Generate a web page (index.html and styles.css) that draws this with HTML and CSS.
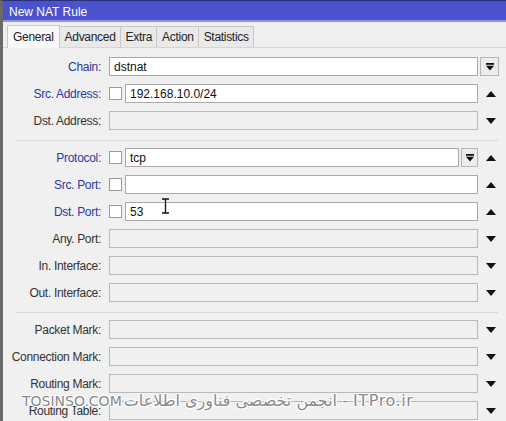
FILE: index.html
```html
<!DOCTYPE html>
<html lang="en">
<head>
    <meta charset="UTF-8">
    <title>New NAT Rule</title>
    <link rel="stylesheet" href="styles.css">
</head>
<body>
    <div class="window">
        <div class="titlebar">New NAT Rule</div>

        <div class="tabs">
            <div class="tab active">General</div>
            <div class="tab">Advanced</div>
            <div class="tab">Extra</div>
            <div class="tab">Action</div>
            <div class="tab">Statistics</div>
        </div>

        <div class="panel">
            <div class="row">
                <div class="label blue">Chain:</div>
                <div class="field">
                    <div class="input">dstnat</div>
                    <div class="dropbtn"><svg width="8" height="8" viewBox="0 0 9 9"><rect x="0" y="0" width="9" height="2" fill="#111"/><path d="M0 3h9L4.5 8.5z" fill="#111"/></svg></div>
                </div>
                <div class="arrow"></div>
            </div>
            <div class="row">
                <div class="label blue">Src. Address:</div>
                <div class="field">
                    <div class="check"></div>
                    <div class="input">192.168.10.0/24</div>
                </div>
                <div class="arrow"><svg width="10" height="6" viewBox="0 0 10 6"><path d="M0 6L5 0l5 6z" fill="#111"/></svg></div>
            </div>
            <div class="row">
                <div class="label">Dst. Address:</div>
                <div class="field"><div class="input off"></div></div>
                <div class="arrow"><svg width="10" height="6" viewBox="0 0 10 6"><path d="M0 0h10L5 6z" fill="#111"/></svg></div>
            </div>

            <div class="sep"></div>

            <div class="row">
                <div class="label blue">Protocol:</div>
                <div class="field">
                    <div class="check"></div>
                    <div class="input">tcp</div>
                    <div class="dropbtn small"><svg width="8" height="8" viewBox="0 0 9 9"><rect x="0" y="0" width="9" height="2" fill="#111"/><path d="M0 3h9L4.5 8.5z" fill="#111"/></svg></div>
                </div>
                <div class="arrow"><svg width="10" height="6" viewBox="0 0 10 6"><path d="M0 6L5 0l5 6z" fill="#111"/></svg></div>
            </div>
            <div class="row">
                <div class="label blue">Src. Port:</div>
                <div class="field">
                    <div class="check"></div>
                    <div class="input"></div>
                </div>
                <div class="arrow"><svg width="10" height="6" viewBox="0 0 10 6"><path d="M0 6L5 0l5 6z" fill="#111"/></svg></div>
            </div>
            <div class="row">
                <div class="label blue">Dst. Port:</div>
                <div class="field">
                    <div class="check"></div>
                    <div class="input">53</div>
                </div>
                <div class="arrow"><svg width="10" height="6" viewBox="0 0 10 6"><path d="M0 6L5 0l5 6z" fill="#111"/></svg></div>
            </div>
            <div class="row">
                <div class="label">Any. Port:</div>
                <div class="field"><div class="input off"></div></div>
                <div class="arrow"><svg width="10" height="6" viewBox="0 0 10 6"><path d="M0 0h10L5 6z" fill="#111"/></svg></div>
            </div>
            <div class="row">
                <div class="label">In. Interface:</div>
                <div class="field"><div class="input off"></div></div>
                <div class="arrow"><svg width="10" height="6" viewBox="0 0 10 6"><path d="M0 0h10L5 6z" fill="#111"/></svg></div>
            </div>
            <div class="row">
                <div class="label">Out. Interface:</div>
                <div class="field"><div class="input off"></div></div>
                <div class="arrow"><svg width="10" height="6" viewBox="0 0 10 6"><path d="M0 0h10L5 6z" fill="#111"/></svg></div>
            </div>

            <div class="sep"></div>

            <div class="row">
                <div class="label">Packet Mark:</div>
                <div class="field"><div class="input off"></div></div>
                <div class="arrow"><svg width="10" height="6" viewBox="0 0 10 6"><path d="M0 0h10L5 6z" fill="#111"/></svg></div>
            </div>
            <div class="row">
                <div class="label">Connection Mark:</div>
                <div class="field"><div class="input off"></div></div>
                <div class="arrow"><svg width="10" height="6" viewBox="0 0 10 6"><path d="M0 0h10L5 6z" fill="#111"/></svg></div>
            </div>
            <div class="row">
                <div class="label">Routing Mark:</div>
                <div class="field"><div class="input off"></div></div>
                <div class="arrow"><svg width="10" height="6" viewBox="0 0 10 6"><path d="M0 0h10L5 6z" fill="#111"/></svg></div>
            </div>
            <div class="row">
                <div class="label">Routing Table:</div>
                <div class="field"><div class="input off"></div></div>
                <div class="arrow"><svg width="10" height="6" viewBox="0 0 10 6"><path d="M0 0h10L5 6z" fill="#111"/></svg></div>
            </div>
        </div>

        <!-- kurzor mysi nad polem Dst. Port -->
        <svg class="cursor" width="9" height="16" viewBox="0 0 9 16"><path d="M1 1h7M4.5 1v14M1 15h7" stroke="#111" stroke-width="1.3" fill="none"/></svg>

        <!-- vodoznak -->
        <div class="watermark" dir="ltr"><span class="wm-left">TOSINSO.COM</span><span class="wm-right">انجمن تخصصی فناوری اطلاعات - ITPro.ir</span></div>
    </div>
</body>
</html>
```

FILE: styles.css
```css
/* Reset */
* {
    margin: 0;
    padding: 0;
    box-sizing: border-box;
}

body {
    font-family: "Liberation Sans", Arial, sans-serif;
    font-size: 12px;
    background-color: #f0f0f0;
    color: #222;
    width: 506px;
    height: 421px;
    overflow: hidden;
}

/* Okno */
.window {
    position: relative;
    height: 421px;
    border-left: 3px solid #6a6a6a;
    border-top: 1px solid #2a2f78;
    background-color: #f0f0f0;
}

.titlebar {
    height: 21px;
    background-color: #4a53cb;
    color: #fff;
    padding: 4px 0 0 6px;
    font-size: 12px;
    border-bottom: 2px solid #8e95e0;
}

/* Zalozky */
.tabs {
    display: flex;
    align-items: flex-end;
    height: 26px;
    padding-left: 4px;
    border-bottom: 1px solid #d6d6d6;
    background-color: #efefef;
}

.tab {
    height: 21px;
    padding: 3px 4px 0 5px;
    border: 1px solid #c9c9c9;
    border-bottom: none;
    border-left: none;
    background-color: #e9e9e9;
    color: #222;
    letter-spacing: -0.3px;
}

.tab.active {
    height: 23px;
    padding: 4px 5px 0 5px;
    border-left: 1px solid #c9c9c9;
    background-color: #f7f7f7;
    margin-bottom: -1px;
}

/* Formular */
.panel {
    padding-top: 5px;
}

.row {
    display: flex;
    align-items: center;
    height: 27px;
}

.label {
    width: 98px;
    text-align: right;
    color: #333;
    letter-spacing: -0.3px;
    margin-right: 8px;
}

.label.blue {
    color: #2d37a6;
}

.field {
    display: flex;
    align-items: center;
    width: 369px;
    height: 19px;
}

.input {
    flex: 1;
    height: 19px;
    border: 1px solid #a9a9a9;
    background-color: #fff;
    padding: 2px 0 0 4px;
    color: #111;
}

.input.off {
    background-color: #f0f0f0;
    border-color: #b9b9b9;
}

.check {
    width: 13px;
    height: 13px;
    border: 1px solid #9a9a9a;
    background-color: #fff;
    margin-right: 3px;
}

.dropbtn {
    width: 19px;
    height: 19px;
    margin-left: 2px;
    margin-right: -21px;
    border: 1px solid #b5b5b5;
    background-color: #ececec;
    display: flex;
    align-items: center;
    justify-content: center;
}

.dropbtn.small {
    width: 17px;
    margin-left: 2px;
    margin-right: 0;
}

.arrow {
    width: 24px;
    display: flex;
    justify-content: center;
    padding-left: 2px;
}

.sep {
    height: 1px;
    background-color: #d9d9d9;
    margin: 6px 8px 3px 12px;
}

/* Kurzor */
.cursor {
    position: absolute;
    left: 158px;
    top: 197px;
}

/* Vodoznak */
.watermark {
    position: absolute;
    left: 19px;
    top: 390px;
    display: flex;
    align-items: baseline;
    color: #8a8a8a;
    text-shadow: 1px 1px 0 #fff, -1px -1px 0 #fff, 1px -1px 0 #fff, -1px 1px 0 #fff;
    white-space: nowrap;
}

.wm-left {
    font-family: "DejaVu Sans", sans-serif;
    font-size: 14px;
}

.wm-right {
    font-family: "DejaVu Sans", "Noto Sans", sans-serif;
    font-size: 16px;
    margin-left: 2px;
    letter-spacing: 0.6px;
}
```
